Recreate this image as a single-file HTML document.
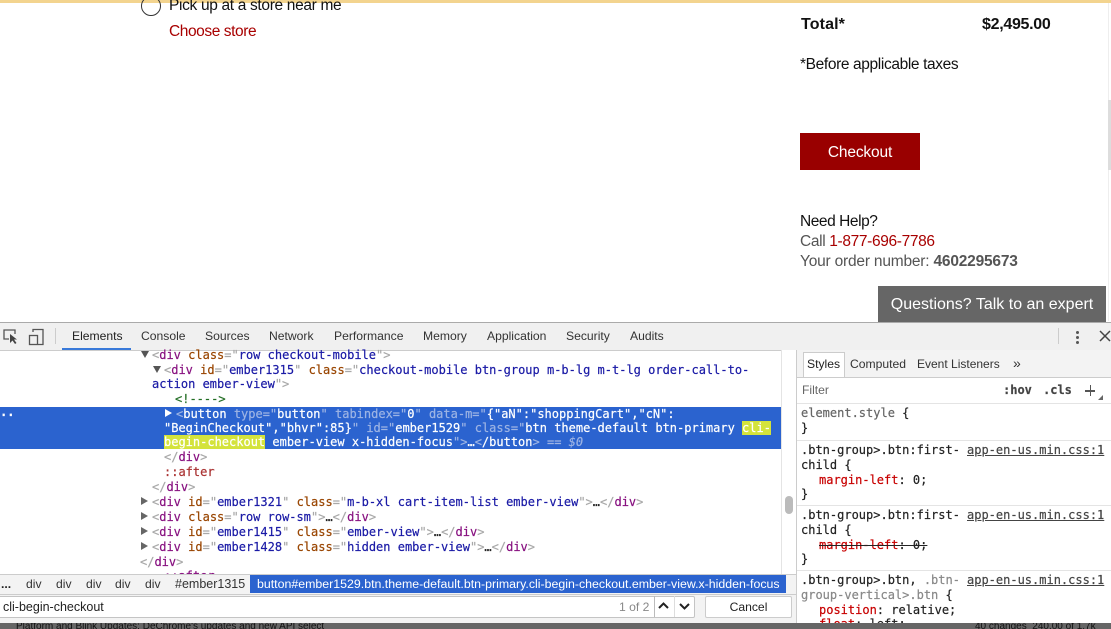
<!DOCTYPE html>
<html><head><meta charset="utf-8"><style>
html,body{margin:0;padding:0;width:1111px;height:629px;overflow:hidden;background:#fff}
#r{position:relative;width:1111px;height:629px;overflow:hidden;filter:blur(.25px)}
#r div{position:absolute;white-space:pre}
.p{font-family:"Liberation Sans",sans-serif;color:#111;font-size:15.5px;line-height:20px}
.u{font-family:"Liberation Sans",sans-serif;font-size:12.15px;color:#333;line-height:16px}
.m{font-family:"DejaVu Sans Mono",monospace;font-size:12px;line-height:15px;color:#222;-webkit-text-stroke:.2px}
.t{color:#881280}.a{color:#994500}.v{color:#1a1aa6}.g{color:#a8a8a8}.c{color:#236e25}
.sel,.sel span{color:#fff}.sel .g{color:#9db4e4}
.h{background:#d4e33b;color:#fff}
.tri{width:0;height:0}
.td{border-left:4px solid transparent;border-right:4px solid transparent;border-top:7px solid #555}
.tr{border-top:4px solid transparent;border-bottom:4px solid transparent;border-left:7px solid #666}
.k{color:#c80000}
</style></head><body><div id="r">
<div style="left:0;top:0;width:1111px;height:3px;background:#f3d48f"></div>
<div style="left:1108px;top:3px;width:1px;height:318px;background:#eee"></div>
<div style="left:1108px;top:100px;width:3px;height:70px;background:#ddd"></div>

<div style="left:141px;top:-4px;width:18px;height:18px;border:1.5px solid #333;border-radius:50%"></div>
<div class="p" style="left:169px;top:-4px;letter-spacing:-.33px">Pick up at a store near me</div>
<div class="p" style="left:169px;top:22px;color:#a80000;letter-spacing:-.42px">Choose store</div>

<div class="p" style="left:801px;top:15px;font-size:16px;font-weight:bold;letter-spacing:.13px">Total*</div>
<div class="p" style="left:982px;top:15px;font-size:16px;font-weight:bold;letter-spacing:-.3px">$2,495.00</div>
<div class="p" style="left:800px;top:55px;letter-spacing:-.37px">*Before applicable taxes</div>
<div style="left:800px;top:133px;width:120px;height:37px;background:#990000"></div>
<div class="p" style="left:800px;top:143px;width:120px;text-align:center;color:#fff;letter-spacing:-.15px">Checkout</div>
<div class="p" style="left:800px;top:212px;letter-spacing:-.44px">Need Help?</div>
<div class="p" style="left:800px;top:232px;color:#555;letter-spacing:-.35px">Call <span style="color:#a80000">1-877-696-7786</span></div>
<div class="p" style="left:800px;top:252px;color:#555;letter-spacing:-.2px">Your order number: <b>4602295673</b></div>
<div style="left:878px;top:286px;width:228px;height:36px;background:#666"></div>
<div class="p" style="left:878px;top:295px;width:228px;font-size:16px;text-align:center;color:#fff">Questions? Talk to an expert</div>

<!-- devtools toolbar -->
<div style="left:0;top:322px;width:1111px;height:27px;background:#f0f0f0;border-top:1px solid #aaa;border-bottom:1px solid #ccc"></div>
<svg style="position:absolute;left:0;top:326px" width="60" height="22" fill="none" stroke="#555" stroke-width="1.3"><path d="M9 13H4V4h11v4"/><path d="M10 8l0 9 2.500-2.500 2.500 3.500 1.500-1-2.500-3.500h3z" fill="#444" stroke="none"/><rect x="29.500" y="9.500" width="8" height="9"/><path d="M33 6V3.500h10v15h-5"/></svg>
<div style="left:55px;top:328px;width:1px;height:16px;background:#ccc"></div>
<div class="u" style="left:72px;top:328px;color:#222">Elements</div>
<div style="left:62px;top:348px;width:69px;height:2px;background:#3879d9"></div>
<div class="u" style="left:141px;top:328px">Console</div>
<div class="u" style="left:205px;top:328px">Sources</div>
<div class="u" style="left:269px;top:328px">Network</div>
<div class="u" style="left:334px;top:328px">Performance</div>
<div class="u" style="left:423px;top:328px">Memory</div>
<div class="u" style="left:487px;top:328px">Application</div>
<div class="u" style="left:566px;top:328px">Security</div>
<div class="u" style="left:630px;top:328px">Audits</div>
<div style="left:1058px;top:328px;width:1px;height:16px;background:#ccc"></div>
<div style="left:1076px;top:331px;width:3px;height:3px;border-radius:50%;background:#555;box-shadow:0 5px 0 #555,0 10px 0 #555"></div>
<svg style="position:absolute;left:1099px;top:330px" width="12" height="12" stroke="#444" stroke-width="1.500"><path d="M1 1l10 10M11 1L1 11"/></svg>

<!-- elements -->
<div class="tri td" style="left:141px;top:351px"></div>
<div class="m" style="left:152px;top:348px"><span class="g">&lt;</span><span class="t">div</span> <span class="a">class</span><span class="g">="</span><span class="v">row checkout-mobile</span><span class="g">"&gt;</span></div>
<div class="tri td" style="left:153px;top:366px"></div>
<div class="m" style="left:164px;top:363px"><span class="g">&lt;</span><span class="t">div</span> <span class="a">id</span><span class="g">="</span><span class="v">ember1315</span><span class="g">"</span> <span class="a">class</span><span class="g">="</span><span class="v">checkout-mobile btn-group m-b-lg m-t-lg order-call-to-</span></div>
<div class="m" style="left:152px;top:377px"><span class="v">action ember-view</span><span class="g">"&gt;</span></div>
<div class="m c" style="left:175px;top:392px">&lt;!----&gt;</div>

<div style="left:0;top:407px;width:781px;height:42px;background:#2b63cf"></div>
<div class="m" style="left:0;top:405px;color:#fff;font-weight:bold">..</div>
<div class="tri" style="left:165px;top:409px;border-top:4px solid transparent;border-bottom:4px solid transparent;border-left:7px solid #fff"></div>
<div class="m sel" style="left:176px;top:407px"><span class="g">&lt;</span>button <span class="g">type="</span>button<span class="g">"</span> <span class="g">tabindex="</span>0<span class="g">"</span> <span class="g">data-m="</span>{"aN":"shoppingCart","cN":</div>
<div class="m sel" style="left:164px;top:421px">"BeginCheckout","bhvr":85}<span class="g">"</span> <span class="g">id="</span>ember1529<span class="g">"</span> <span class="g">class="</span>btn theme-default btn-primary <span class="h">cli-</span></div>
<div class="m sel" style="left:164px;top:435px"><span class="h">begin-checkout</span> ember-view x-hidden-focus<span class="g">"&gt;</span>…<span class="g">&lt;</span>/button<span class="g">&gt;</span> <span class="g">==</span> <i class="g">$0</i></div>

<div class="m" style="left:164px;top:450px"><span class="g">&lt;/</span><span class="t">div</span><span class="g">&gt;</span></div>
<div class="m" style="left:164px;top:465px;color:#a33">::after</div>
<div class="m" style="left:152px;top:480px"><span class="g">&lt;/</span><span class="t">div</span><span class="g">&gt;</span></div>
<div class="tri tr" style="left:141px;top:497px"></div>
<div class="m" style="left:152px;top:495px"><span class="g">&lt;</span><span class="t">div</span> <span class="a">id</span><span class="g">="</span><span class="v">ember1321</span><span class="g">"</span> <span class="a">class</span><span class="g">="</span><span class="v">m-b-xl cart-item-list ember-view</span><span class="g">"&gt;</span>…<span class="g">&lt;/</span><span class="t">div</span><span class="g">&gt;</span></div>
<div class="tri tr" style="left:141px;top:512px"></div>
<div class="m" style="left:152px;top:510px"><span class="g">&lt;</span><span class="t">div</span> <span class="a">class</span><span class="g">="</span><span class="v">row row-sm</span><span class="g">"&gt;</span>…<span class="g">&lt;/</span><span class="t">div</span><span class="g">&gt;</span></div>
<div class="tri tr" style="left:141px;top:527px"></div>
<div class="m" style="left:152px;top:525px"><span class="g">&lt;</span><span class="t">div</span> <span class="a">id</span><span class="g">="</span><span class="v">ember1415</span><span class="g">"</span> <span class="a">class</span><span class="g">="</span><span class="v">ember-view</span><span class="g">"&gt;</span>…<span class="g">&lt;/</span><span class="t">div</span><span class="g">&gt;</span></div>
<div class="tri tr" style="left:141px;top:542px"></div>
<div class="m" style="left:152px;top:540px"><span class="g">&lt;</span><span class="t">div</span> <span class="a">id</span><span class="g">="</span><span class="v">ember1428</span><span class="g">"</span> <span class="a">class</span><span class="g">="</span><span class="v">hidden ember-view</span><span class="g">"&gt;</span>…<span class="g">&lt;/</span><span class="t">div</span><span class="g">&gt;</span></div>
<div class="m" style="left:140px;top:555px"><span class="g">&lt;/</span><span class="t">div</span><span class="g">&gt;</span></div>
<div class="m t" style="left:164px;top:569px">::after</div>

<div style="left:781px;top:350px;width:15px;height:224px;background:#fff;border-left:1px solid #e4e4e4"></div>
<div style="left:785px;top:496px;width:8px;height:18px;background:#bbb;border-radius:4px"></div>
<div style="left:796px;top:350px;width:1px;height:273px;background:#ccc"></div>

<!-- breadcrumb -->
<div style="left:0;top:574px;width:796px;height:20px;background:#f3f3f3;border-top:1px solid #ccc"></div>
<div class="u" style="left:1px;top:576px;color:#222;font-weight:bold">...</div>
<div class="u" style="left:26px;top:576px">div</div>
<div class="u" style="left:56px;top:576px">div</div>
<div class="u" style="left:86px;top:576px">div</div>
<div class="u" style="left:115px;top:576px">div</div>
<div class="u" style="left:145px;top:576px">div</div>
<div class="u" style="left:175px;top:576px;font-size:12.5px">#ember1315</div>
<div style="left:250px;top:575px;width:536px;height:18px;background:#2b63cf"></div>
<div class="u" style="left:257px;top:576px;color:#fff;font-size:12.36px">button#ember1529.btn.theme-default.btn-primary.cli-begin-checkout.ember-view.x-hidden-focus</div>

<!-- search -->
<div style="left:0;top:594px;width:796px;height:29px;background:#f3f3f3;border-top:1px solid #ccc"></div>
<div style="left:0;top:596px;width:694px;height:20px;background:#fff;border:1px solid #c4c4c4;border-left:0;border-radius:0 2px 2px 0"></div>
<div class="u" style="left:3px;top:599px;color:#222;font-size:12.5px">cli-begin-checkout</div>
<div class="u" style="left:619px;top:599px;color:#888">1 of 2</div>
<div style="left:654px;top:596px;width:1px;height:21px;background:#bbb"></div>
<div style="left:674px;top:596px;width:1px;height:21px;background:#ddd"></div>
<svg style="position:absolute;left:658px;top:601px" width="32" height="10" fill="none" stroke="#222" stroke-width="2"><path d="M1 7l4.500-4.500L10 7M22 3l4.500 4.500L31 3"/></svg>
<div style="left:705px;top:596px;width:85px;height:20px;background:#fff;border:1px solid #ccc;border-radius:2px"></div>
<div class="u" style="left:705px;top:599px;width:87px;text-align:center;color:#222">Cancel</div>

<!-- styles -->
<div style="left:797px;top:350px;width:314px;height:27px;background:#f3f3f3;border-bottom:1px solid #ccc"></div>
<div style="left:803px;top:352px;width:40px;height:24px;background:#fff;border:1px solid #ccc;border-bottom:0"></div>
<div class="u" style="left:807px;top:356px;color:#222">Styles</div>
<div class="u" style="left:850px;top:356px">Computed</div>
<div class="u" style="left:917px;top:356px;font-size:12px">Event Listeners</div>
<div class="u" style="left:1013px;top:355px;font-size:14px">»</div>
<div class="u" style="left:802px;top:382px;color:#666">Filter</div>
<div class="m" style="left:1003px;top:383px;font-weight:bold;color:#444">:hov</div>
<div class="m" style="left:1043px;top:383px;font-weight:bold;color:#444">.cls</div>
<div style="left:1085px;top:390px;width:10px;height:1.500px;background:#555"></div>
<div style="left:1089.500px;top:385px;width:1.500px;height:11px;background:#555"></div>
<div style="left:1098px;top:395px;width:0;height:0;border-left:5px solid transparent;border-bottom:5px solid #666"></div>
<div style="left:797px;top:403px;width:314px;height:1px;background:#e4e4e4"></div>
<div class="m" style="left:801px;top:406px;color:#666">element.style <span style="color:#222">{</span></div>
<div class="m" style="left:801px;top:421px">}</div>
<div style="left:797px;top:440px;width:314px;height:1px;background:#e4e4e4"></div>
<div class="m" style="left:801px;top:443px">.btn-group&gt;.btn:first-</div>
<div class="m" style="left:967px;top:443px;color:#444;text-decoration:underline">app-en-us.min.css:1</div>
<div class="m" style="left:801px;top:458px">child {</div>
<div class="m" style="left:819px;top:473px"><span class="k">margin-left</span>: 0;</div>
<div class="m" style="left:801px;top:487px">}</div>
<div style="left:797px;top:505px;width:314px;height:1px;background:#e4e4e4"></div>
<div class="m" style="left:801px;top:508px">.btn-group&gt;.btn:first-</div>
<div class="m" style="left:967px;top:508px;color:#444;text-decoration:underline">app-en-us.min.css:1</div>
<div class="m" style="left:801px;top:523px">child {</div>
<div class="m" style="left:819px;top:538px;text-decoration:line-through"><span class="k">margin-left</span>: 0;</div>
<div class="m" style="left:801px;top:552px">}</div>
<div style="left:797px;top:570px;width:314px;height:1px;background:#e4e4e4"></div>
<div class="m" style="left:801px;top:573px">.btn-group&gt;.btn, <span style="color:#888">.btn-</span></div>
<div class="m" style="left:967px;top:573px;color:#444;text-decoration:underline">app-en-us.min.css:1</div>
<div class="m" style="left:801px;top:588px"><span style="color:#888">group-vertical&gt;.btn</span> {</div>
<div class="m" style="left:819px;top:603px"><span class="k">position</span>: relative;</div>
<div class="m" style="left:819px;top:617px"><span class="k">float</span>: left;</div>

<!-- bottom status -->
<div style="left:0;top:623px;width:1111px;height:6px;background:#666;overflow:hidden"><div style="left:16px;top:-2px;font:10px 'Liberation Sans',sans-serif;color:#111">Platform and Blink Updates: DeChrome's updates and new API select</div><div style="left:975px;top:-2px;font:10px 'Liberation Sans',sans-serif;color:#111">40 changes  240.00 of 1.7k</div></div>
</div></body></html>
